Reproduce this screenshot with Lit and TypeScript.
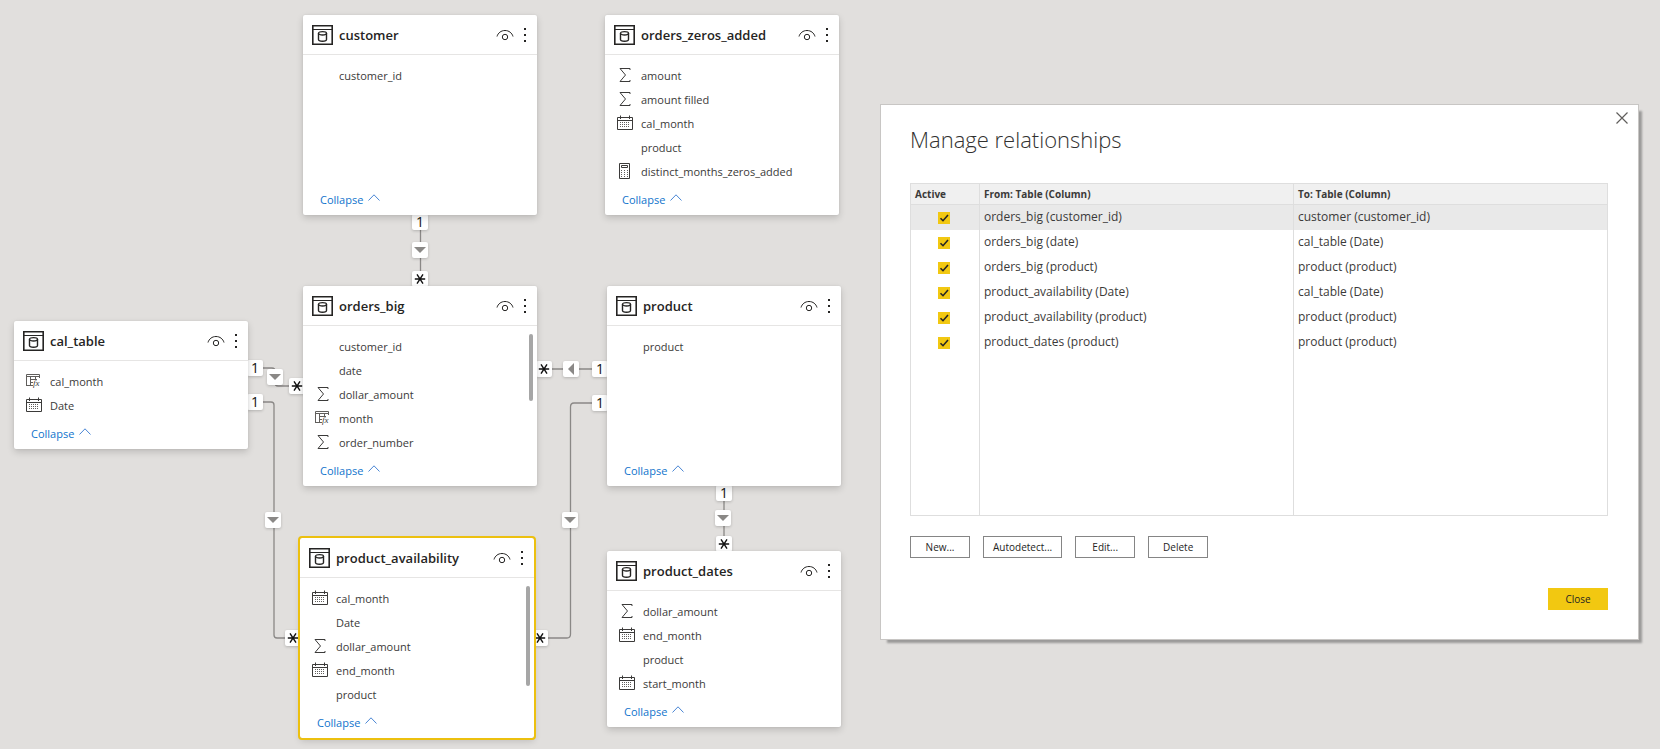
import { LitElement, html, svg, css, nothing, type TemplateResult } from "lit";
import { customElement, property } from "lit/decorators.js";
import { classMap } from "lit/directives/class-map.js";
import { styleMap } from "lit/directives/style-map.js";

type FieldKind = "none" | "sum" | "date" | "measure" | "calculated";

interface Field {
  name: string;
  kind: FieldKind;
}

interface TableNode {
  name: string;
  x: number;
  y: number;
  rows: number;
  fields: Field[];
  selected?: boolean;
  thumb?: number;
}

const f = (name: string, kind: FieldKind = "none"): Field => ({ name, kind });

const TABLES: TableNode[] = [
  { name: "customer", x: 303, y: 15, rows: 5, fields: [f("customer_id")] },
  {
    name: "orders_zeros_added", x: 605, y: 15, rows: 5,
    fields: [
      f("amount", "sum"), f("amount filled", "sum"), f("cal_month", "date"),
      f("product"), f("distinct_months_zeros_added", "measure"),
    ],
  },
  {
    name: "cal_table", x: 14, y: 321, rows: 2,
    fields: [f("cal_month", "calculated"), f("Date", "date")],
  },
  {
    name: "orders_big", x: 303, y: 286, rows: 5, thumb: 67,
    fields: [
      f("customer_id"), f("date"), f("dollar_amount", "sum"),
      f("month", "calculated"), f("order_number", "sum"),
    ],
  },
  { name: "product", x: 607, y: 286, rows: 5, fields: [f("product")] },
  {
    name: "product_availability", x: 300, y: 538, rows: 5, thumb: 100, selected: true,
    fields: [
      f("cal_month", "date"), f("Date"), f("dollar_amount", "sum"),
      f("end_month", "date"), f("product"),
    ],
  },
  {
    name: "product_dates", x: 607, y: 551, rows: 4,
    fields: [
      f("dollar_amount", "sum"), f("end_month", "date"),
      f("product"), f("start_month", "date"),
    ],
  },
];

type MarkKind = "one" | "many" | "down" | "left";

const MARKS: { kind: MarkKind; x: number; y: number }[] = [
  { kind: "one", x: 412, y: 214 },
  { kind: "down", x: 412, y: 242 },
  { kind: "many", x: 412, y: 271 },
  { kind: "one", x: 247, y: 360 },
  { kind: "down", x: 267, y: 369 },
  { kind: "many", x: 289, y: 378 },
  { kind: "one", x: 247, y: 394 },
  { kind: "down", x: 265, y: 512 },
  { kind: "many", x: 285, y: 630 },
  { kind: "many", x: 536, y: 361 },
  { kind: "left", x: 563, y: 361 },
  { kind: "one", x: 592, y: 361 },
  { kind: "one", x: 592, y: 395 },
  { kind: "down", x: 562, y: 512 },
  { kind: "many", x: 532, y: 630 },
  { kind: "one", x: 716, y: 485 },
  { kind: "down", x: 715, y: 510 },
  { kind: "many", x: 716, y: 536 },
];

const WIRES = [
  "M420.5 222V280",
  "M262 368H272Q275 368 275 371V383Q275 386 278 386H290",
  "M262 402H271Q274 402 274 405V635Q274 638 277 638H290",
  "M545 369H595",
  "M595 403H574Q570.500 403 570.500 407V634Q570.500 638 567 638H545",
  "M724 494V545",
];

const RELATIONSHIPS: [string, string][] = [
  ["orders_big (customer_id)", "customer (customer_id)"],
  ["orders_big (date)", "cal_table (Date)"],
  ["orders_big (product)", "product (product)"],
  ["product_availability (Date)", "cal_table (Date)"],
  ["product_availability (product)", "product (product)"],
  ["product_dates (product)", "product (product)"],
];

const calendarDots = [7, 9, 11].flatMap((y) =>
  [4, 6, 8, 10, 12].map((x) => svg`<rect x=${x - 1} y=${y} width="1" height="1"/>`)
);

const FIELD_ICONS: Record<FieldKind, TemplateResult | typeof nothing> = {
  none: nothing,
  sum: html`<svg width="16" height="16" viewBox="0 0 16 16" fill="none" stroke="#3b3a39">
    <path d="M13 3V1.500H3L8.500 8L3 14.500H13V13"/></svg>`,
  date: html`<svg width="16" height="16" viewBox="0 0 16 16">
    <path d="M.5 2.500H15.500V14.500H.5ZM.5 5.500H15.500M3.500 .5V4M12.500 .5V4" fill="none" stroke="#3b3a39"/>
    <g fill="#605e5c">${calendarDots}</g></svg>`,
  measure: html`<svg width="16" height="16" viewBox="0 0 16 16">
    <path d="M2.500 .5H12.500V15.500H2.500ZM4.500 2.500H10.500V4.500H4.500Z" fill="none" stroke="#3b3a39"/>
    <g fill="#605e5c">${[7, 9, 11, 13].flatMap((y) =>
      [4, 7, 10].map((x) => svg`<rect x=${x} y=${y} width="1" height="1"/>`))}</g></svg>`,
  calculated: html`<svg width="16" height="16" viewBox="0 0 16 16">
    <path d="M.5 12.500V1.500H13.500V5M.5 3.500H13.500M4.500 3.500V12.500M0 12.500H7M4.500 6.500H11M9.500 3.500V6M4.500 9.500H7" fill="none" stroke="#605e5c"/>
    <text x="7" y="13" font-family="Liberation Serif, serif" font-style="italic" font-size="9" fill="#3b3a39">fx</text></svg>`,
};

const MARK_ICONS: Record<MarkKind, TemplateResult> = {
  one: html`<span>1</span>`,
  many: html`<svg width="12" height="12" viewBox="0 0 12 12" stroke="#111" stroke-width="1.400">
    <path d="M.8 6H11.200M3 1.300L9 10.700M9 1.300L3 10.700"/></svg>`,
  down: html`<svg width="12" height="6" viewBox="0 0 12 6"><path d="M0 0H12L6 6Z" fill="#8a8886"/></svg>`,
  left: html`<svg width="6" height="12" viewBox="0 0 6 12"><path d="M6 0V12L0 6Z" fill="#8a8886"/></svg>`,
};

@customElement("table-card")
export class TableCard extends LitElement {
  @property({ attribute: false }) node!: TableNode;

  static styles = css`
    :host { display: block; }
    .card {
      position: relative;
      display: flex;
      flex-direction: column;
      box-sizing: border-box;
      width: 234px;
      background: #fff;
      border-radius: 2px;
      box-shadow: 0 3px 7px rgba(0, 0, 0, 0.16), 0 0 2px rgba(0, 0, 0, 0.08);
    }
    .selected { outline: 2px solid #ecc00f; }
    .head {
      display: flex;
      align-items: center;
      height: 39px;
      padding: 0 9px;
      border-bottom: 1px solid #e6e5e4;
    }
    .name {
      flex: 1;
      margin: 0 0 0 6px;
      font-size: 13px;
      line-height: 20px;
      font-weight: 600;
      color: #252423;
    }
    button {
      display: flex;
      align-items: center;
      padding: 0;
      border: 0;
      background: none;
      font: inherit;
      cursor: pointer;
    }
    .eye { margin-right: 8px; }
    .fields {
      margin: 0;
      padding: 9px 12px 0;
      list-style: none;
    }
    .field {
      display: flex;
      align-items: center;
      gap: 8px;
      height: 24px;
      color: #3b3a39;
    }
    .icon { display: flex; width: 16px; height: 18px; }
    .collapse {
      height: 31px;
      margin-top: auto;
      padding: 0 17px;
      gap: 5px;
      color: #0f74cc;
    }
    .collapse svg { margin-bottom: 4px; }
    .thumb {
      position: absolute;
      top: 48px;
      right: 4px;
      width: 4px;
      border-radius: 2px;
      background: #a6a6a6;
    }
  `;

  render() {
    const { name, rows, fields, selected, thumb } = this.node;
    return html`
      <article class=${classMap({ card: true, selected: !!selected })}
        style=${styleMap({ minHeight: `${80 + rows * 24}px` })}>
        <header class="head">
          <svg width="21" height="20" viewBox="0 0 21 20" fill="none" stroke="#252423">
            <path d="M.8 .8H20.200V19.200H.8Z" stroke-width="1.600"/>
            <path d="M1 4.500H20"/>
            <path d="M6.500 8V14.500C6.500 16.800 14.500 16.800 14.500 14.500V8" stroke-width="1.400"/>
            <ellipse cx="10.500" cy="8.300" rx="4" ry="1.700" stroke-width="1.300"/>
          </svg>
          <h2 class="name">${name}</h2>
          <button class="eye" aria-label="Toggle visibility of ${name}">
            <svg width="18" height="12" viewBox="0 0 18 12" fill="none" stroke="#252423">
              <path d="M1 7.500C2 4 5 1.500 9 1.500S16 4 17 7.500"/>
              <circle cx="9" cy="8" r="2.700"/>
            </svg>
          </button>
          <button aria-label="More options for ${name}">
            <svg width="6" height="16" viewBox="0 0 6 16" fill="#252423">
              <path d="M2 1H4V3H2ZM2 7H4V9H2ZM2 13H4V15H2Z"/>
            </svg>
          </button>
        </header>
        <ul class="fields">
          ${fields.map((x) => html`<li class="field"><span class="icon">${FIELD_ICONS[x.kind]}</span>${x.name}</li>`)}
        </ul>
        <button class="collapse">Collapse
          <svg width="12" height="7" viewBox="0 0 12 7" fill="none" stroke="#4a86d4">
            <path d="M.5 6.500L6 .8L11.500 6.500"/>
          </svg>
        </button>
        ${thumb ? html`<div class="thumb" style=${styleMap({ height: `${thumb}px` })}></div>` : nothing}
      </article>`;
  }
}

@customElement("relationship-dialog")
export class RelationshipDialog extends LitElement {
  static styles = css`
    :host { display: block; }
    .dialog {
      position: relative;
      display: flex;
      flex-direction: column;
      padding: 14px 30px 29px 29px;
      border: 1px solid #c8c6c4;
      background: #fff;
      box-shadow: 5px 5px 2px -2px #9b9a99;
    }
    .title {
      margin: 0;
      font-size: 22px;
      line-height: 40px;
      font-weight: 300;
      color: #323130;
    }
    .dismiss {
      position: absolute;
      top: 6px;
      right: 9px;
      display: flex;
      padding: 1px;
      border: 0;
      background: none;
    }
    .frame {
      display: grid;
      height: 331px;
      margin-top: 24px;
      border: 1px solid #dedede;
    }
    table {
      width: 100%;
      height: 100%;
      table-layout: fixed;
      border-collapse: separate;
      border-spacing: 0;
      font-size: 12px;
      color: #3b3a39;
    }
    .active { width: 68px; box-sizing: border-box; }
    th, td {
      padding: 0 4px;
      text-align: left;
      border-left: 1px solid #dedede;
    }
    th:first-child, td:first-child { border-left: 0; }
    th {
      height: 20px;
      background: #f0f0f0;
      border-bottom: 1px solid #dedede;
      font-weight: 700;
      font-size: 10px;
      line-height: 16px;
    }
    .row td { height: 23px; padding-bottom: 2px; line-height: 16px; }
    .picked td { background: #e9e9e9; }
    .check input {
      display: block;
      appearance: none;
      width: 12px;
      height: 12px;
      margin: 3px 0 0 23px;
      background: #f2c811;
    }
    .check input:checked {
      background: #f2c811 url("data:image/svg+xml,%3Csvg xmlns='http://www.w3.org/2000/svg' viewBox='0 0 12 12'%3E%3Cpath d='M2.500 6.200L5 8.700L10 3' fill='none' stroke='%23252423' stroke-width='1.600'/%3E%3C/svg%3E");
    }
    .actions { display: flex; gap: 13px; margin-top: 20px; }
    .btn {
      box-sizing: border-box;
      min-width: 60px;
      height: 22px;
      padding: 0 9px;
      border: 1px solid #858585;
      background: #fff;
      font: inherit;
      font-size: 10px;
      color: #252423;
    }
    .close { align-self: flex-end; margin-top: 30px; border: 0; background: #f2c811; }
  `;

  render() {
    return html`
      <section class="dialog" role="dialog" aria-labelledby="title">
        <h1 class="title" id="title">Manage relationships</h1>
        <button class="dismiss" aria-label="Close dialog">
          <svg width="12" height="12" viewBox="0 0 12 12" fill="none" stroke="#605e5c" stroke-width="1.200">
            <path d="M.5 .5L11.500 11.500M11.500 .5L.5 11.500"/>
          </svg>
        </button>
        <div class="frame">
          <table>
            <thead>
              <tr><th class="active">Active</th><th>From: Table (Column)</th><th>To: Table (Column)</th></tr>
            </thead>
            <tbody>
              ${RELATIONSHIPS.map(([from, to], i) => html`
                <tr class=${classMap({ row: true, picked: i === 0 })}>
                  <td class="check"><input type="checkbox" checked aria-label="Active: ${from} to ${to}" /></td>
                  <td>${from}</td>
                  <td>${to}</td>
                </tr>`)}
              <tr aria-hidden="true"><td></td><td></td><td></td></tr>
            </tbody>
          </table>
        </div>
        <div class="actions">
          <button class="btn">New...</button>
          <button class="btn">Autodetect...</button>
          <button class="btn">Edit...</button>
          <button class="btn">Delete</button>
        </div>
        <button class="btn close">Close</button>
      </section>`;
  }
}

@customElement("app-root")
export class AppRoot extends LitElement {
  static styles = css`
    :host {
      display: flex;
      align-items: flex-start;
      min-height: 100vh;
      background: #e1dfdd;
      font-family: "Open Sans", "Noto Sans", sans-serif;
      font-size: 11px;
      line-height: 16px;
    }
    .canvas {
      position: relative;
      flex: none;
      width: 880px;
      min-height: 100vh;
    }
    .wires { position: absolute; left: 0; top: 0; }
    .mark {
      position: absolute;
      display: flex;
      align-items: center;
      justify-content: center;
      width: 16px;
      height: 16px;
      border-radius: 2px;
      background: #fff;
      box-shadow: 0 1px 3px rgba(0, 0, 0, 0.2);
      font-size: 14px;
      color: #111;
    }
    table-card { position: absolute; }
    relationship-dialog { flex: 1; margin: 104px 21px 20px 0; }
  `;

  render() {
    const at = (p: { x: number; y: number }) => styleMap({ left: `${p.x}px`, top: `${p.y}px` });
    return html`
      <main class="canvas">
        <svg class="wires" width="880" height="749" fill="none" stroke="#8a8886" stroke-width="1.300">
          ${WIRES.map((d) => svg`<path d=${d} />`)}
        </svg>
        ${MARKS.map((m) => html`<div class="mark" style=${at(m)}>${MARK_ICONS[m.kind]}</div>`)}
        ${TABLES.map((t) => html`<table-card style=${at(t)} .node=${t}></table-card>`)}
      </main>
      <relationship-dialog></relationship-dialog>`;
  }
}
